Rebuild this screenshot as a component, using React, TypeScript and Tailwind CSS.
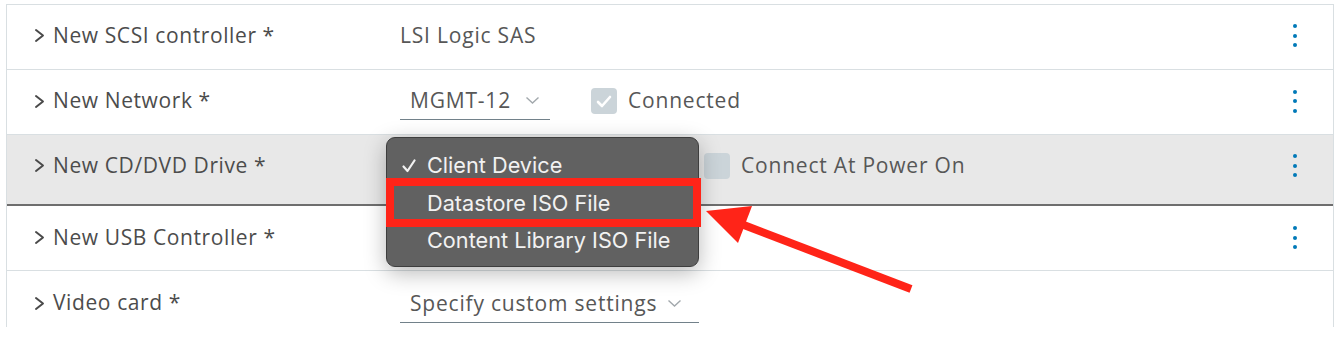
import React from 'react';

const Chevron = () => (
  <svg width="11" height="15" viewBox="0 0 11 15" className="shrink-0">
    <polyline points="2,2 9,7.5 2,13" fill="none" stroke="#4a4a4a" strokeWidth="2" strokeLinecap="round" strokeLinejoin="round" />
  </svg>
);

const Caret = () => (
  <svg width="15" height="9" viewBox="0 0 15 9" className="shrink-0">
    <polyline points="1.5,1.5 7.5,7 13.5,1.5" fill="none" stroke="#a2a8ac" strokeWidth="1.4" />
  </svg>
);

const Kebab = () => (
  <div className="w-[76px] flex flex-col items-center gap-[5.5px]">
    <span className="block w-[4px] h-[4px] rounded-full bg-[#0079b8]" />
    <span className="block w-[4px] h-[4px] rounded-full bg-[#0079b8]" />
    <span className="block w-[4px] h-[4px] rounded-full bg-[#0079b8]" />
  </div>
);

const Checkbox = ({ checked }: { checked?: boolean }) => (
  <span className="w-[26px] h-[26px] rounded-[4px] bg-[#cbd4d9] flex items-center justify-center shrink-0">
    {checked && (
      <svg width="16" height="13" viewBox="0 0 16 13">
        <polyline points="2,7 6,11 14,2" fill="none" stroke="#ffffff" strokeWidth="2.6" strokeLinecap="round" strokeLinejoin="round" />
      </svg>
    )}
  </span>
);

const Row = ({
  label,
  children,
  kebab = true,
  className = 'h-[65px] border-b border-[#d9dfe2]',
}: {
  label: string;
  children?: React.ReactNode;
  kebab?: boolean;
  className?: string;
}) => (
  <div className={`flex items-center ${className}`}>
    <div className="w-[393px] pl-[27px] flex items-center gap-[8px] text-[21px] tracking-[0.6px] text-[#4c4c4c]">
      <Chevron />
      <span>{label}</span>
    </div>
    <div className="flex-1 flex items-center text-[21px] tracking-[0.8px] text-[#575757]">{children}</div>
    {kebab ? <Kebab /> : <div className="w-[76px]" />}
  </div>
);

const App = () => {
  return (
    <div
      className="relative w-[1341px] h-[339px] bg-white overflow-hidden"
      style={{ fontFamily: '"Open Sans", "Liberation Sans", sans-serif' }}
    >
      <div className="ml-[6px] mt-[4px] w-[1328px] h-[323px] border-x border-t border-[#d9dfe2] overflow-hidden">
        <Row label="New SCSI controller *" className="h-[65px] pb-[3px] border-b border-[#d9dfe2]">
          <span>LSI Logic SAS</span>
        </Row>
        <Row label="New Network *" className="h-[65px] pb-[2px] border-b border-[#d9dfe2]">
          <div className="w-[150px] h-[38px] border-b-[1.5px] border-[#72818a] flex items-center pl-[10px] gap-[14px]">
            <span>MGMT-12</span>
            <Caret />
          </div>
          <div className="ml-[41px] flex items-center gap-[11px]">
            <Checkbox checked />
            <span>Connected</span>
          </div>
        </Row>
        <Row label="New CD/DVD Drive *" className="h-[71px] pb-[8px] bg-[#e8e8e8] border-b-2 border-[#6e6e6e]">
          <div className="w-[304px] h-[38px]" />
          <div className="flex items-center gap-[11px]">
            <Checkbox />
            <span>Connect At Power On</span>
          </div>
        </Row>
        <Row label="New USB Controller *" className="h-[65px] pb-[1px] border-b border-[#d9dfe2]" />
        <Row label="Video card *" kebab={false} className="h-[58px] pt-[6px]">
          <div className="w-[299px] h-[38px] mt-[2px] border-b-[1.5px] border-[#72818a] flex items-center pl-[10px] gap-[10px]">
            <span>Specify custom settings</span>
            <Caret />
          </div>
        </Row>
      </div>

      {/* native popup menu */}
      <div
        className="absolute left-[386px] top-[137px] w-[313px] h-[130px] rounded-[9px] bg-[#616161] border border-[#3e3e3e] shadow-[0_6px_22px_rgba(0,0,0,0.28)] pt-[9px] text-[#f2f2f2] text-[21.7px]"
        style={{ fontFamily: 'Inter, "Liberation Sans", sans-serif' }}
      >
        <div className="h-[37px] flex items-center pl-[15px]">
          <svg width="14" height="14" viewBox="0 0 14 14" className="mr-[11px]">
            <polyline points="1.5,7.5 5.5,12 12.5,1.5" fill="none" stroke="#f2f2f2" strokeWidth="2.2" strokeLinecap="round" strokeLinejoin="round" />
          </svg>
          <span>Client Device</span>
        </div>
        <div className="h-[38px] flex items-center pl-[40px]">Datastore ISO File</div>
        <div className="h-[37px] flex items-center pl-[40px]">Content Library ISO File</div>
      </div>

      {/* annotation */}
      <div className="absolute left-[386px] top-[178px] w-[315px] h-[49px] border-[8px] border-[#ff2418]" />
      <svg className="absolute left-0 top-0" width="1341" height="339" viewBox="0 0 1341 339">
        <line x1="736" y1="222" x2="911" y2="289" stroke="#ff2418" strokeWidth="8" />
        <polygon points="706,211 752,206 738,243" fill="#ff2418" />
      </svg>
    </div>
  );
};

export default App;
